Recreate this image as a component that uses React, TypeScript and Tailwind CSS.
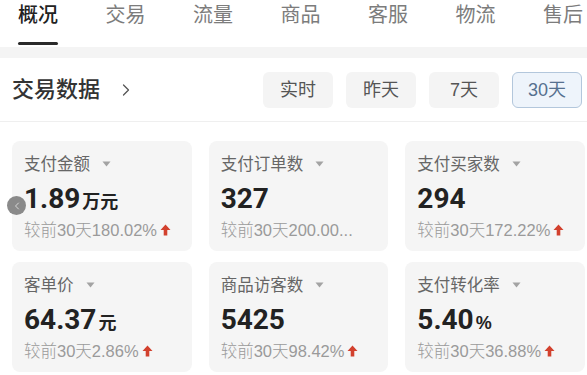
import React from "react";
import { ChevronRight, ChevronLeft } from "lucide-react";

const tabs = ["概况", "交易", "流量", "商品", "客服", "物流", "售后"];
const ranges = ["实时", "昨天", "7天", "30天"];

function UpArrow() {
  return (
    <svg width="11" height="12" viewBox="0 0 11 12" className="ml-[3px] shrink-0">
      <path d="M5.5 0.5 L10.5 6 H7.3 V11.5 H3.7 V6 H0.5 Z" fill="#d2412e" />
    </svg>
  );
}

function Caret() {
  return (
    <svg width="9" height="6" viewBox="0 0 9 6" className="ml-[12px]">
      <path d="M0.5 0.5 H8.5 L4.5 5.5 Z" fill="#a3a3a3" />
    </svg>
  );
}

type CardProps = { label: string; value: string; unit?: string; cmp: string; arrow?: boolean };

function Card({ label, value, unit, cmp, arrow = true }: CardProps) {
  return (
    <div className="h-[110px] rounded-[8px] bg-[#f5f5f5] px-3 pt-[12px] overflow-hidden">
      <div className="flex items-center h-[22px] text-[16.5px] leading-[22px] text-[#666]">
        <span>{label}</span>
        <Caret />
      </div>
      <div className="mt-[6px] h-[36px] flex items-baseline leading-[36px] text-[#222]">
        <span className="font-['Roboto',sans-serif] text-[28px] font-bold">{value}</span>
        {unit && <span className="text-[18px] font-bold ml-[2px]">{unit}</span>}
      </div>
      <div className="mt-[2px] flex items-center h-[22px] text-[16.5px] leading-[22px] font-light text-[#9a9a9a] whitespace-nowrap">
        <span>{cmp}</span>
        {arrow && <UpArrow />}
      </div>
    </div>
  );
}

export default function App() {
  return (
    <div className="relative w-[587px] h-[375px] overflow-hidden bg-white font-['Liberation_Sans','Noto_Sans_CJK_SC',sans-serif]">
      {/* Tabs */}
      <div className="flex h-[47px] pl-[18px] gap-[47.5px]">
        {tabs.map((t, i) => (
          <div key={t} className="flex flex-col items-center shrink-0 w-[40px]">
            <span
              className={
                i === 0
                  ? "pt-[3px] text-[20px] leading-[24px] font-medium text-[#222] whitespace-nowrap"
                  : "pt-[3px] text-[20px] leading-[24px] text-[#7c7c7c] whitespace-nowrap"
              }
            >
              {t}
            </span>
            {i === 0 && <div className="mt-[15px] h-[3px] w-[40px] rounded-full bg-[#2a2a2a]" />}
          </div>
        ))}
      </div>
      <div className="h-[11px] bg-[#f4f4f4]" />

      {/* Section header */}
      <div className="flex items-center justify-between pl-3 pr-[5px] pt-[14px] pb-[13px] border-b border-[#efefef]">
        <div className="flex items-center">
          <span className="text-[22px] leading-[30px] font-medium text-[#333]">交易数据</span>
          <ChevronRight size={20} strokeWidth={1.5} className="ml-[16px] text-[#555]" />
        </div>
        <div className="flex gap-[13px]">
          {ranges.map((r, i) => (
            <div
              key={r}
              className={
                i === 3
                  ? "w-[70px] h-[36px] flex items-center justify-center rounded-[6px] border border-[#b3c7dc] bg-[#eef4fb] text-[18px] text-[#56708f]"
                  : "w-[70px] h-[36px] flex items-center justify-center rounded-[6px] bg-[#f4f4f4] text-[18px] text-[#555]"
              }
            >
              {r}
            </div>
          ))}
        </div>
      </div>

      {/* Cards */}
      <div className="grid grid-cols-3 gap-x-[17px] gap-y-[11px] pl-3 pr-[2px] pt-[19px]">
        <Card label="支付金额" value="1.89" unit="万元" cmp="较前30天180.02%" />
        <Card label="支付订单数" value="327" cmp="较前30天200.00..." arrow={false} />
        <Card label="支付买家数" value="294" cmp="较前30天172.22%" />
        <Card label="客单价" value="64.37" unit="元" cmp="较前30天2.86%" />
        <Card label="商品访客数" value="5425" cmp="较前30天98.42%" />
        <Card label="支付转化率" value="5.40" unit="%" cmp="较前30天36.88%" />
      </div>

      {/* Floating back bubble */}
      <div className="absolute left-[7px] top-[196px] w-[19px] h-[19px] rounded-full bg-[#8a8a8a] flex items-center justify-center">
        <ChevronLeft size={12} strokeWidth={2} className="text-[#d8d8d8]" />
      </div>
    </div>
  );
}
